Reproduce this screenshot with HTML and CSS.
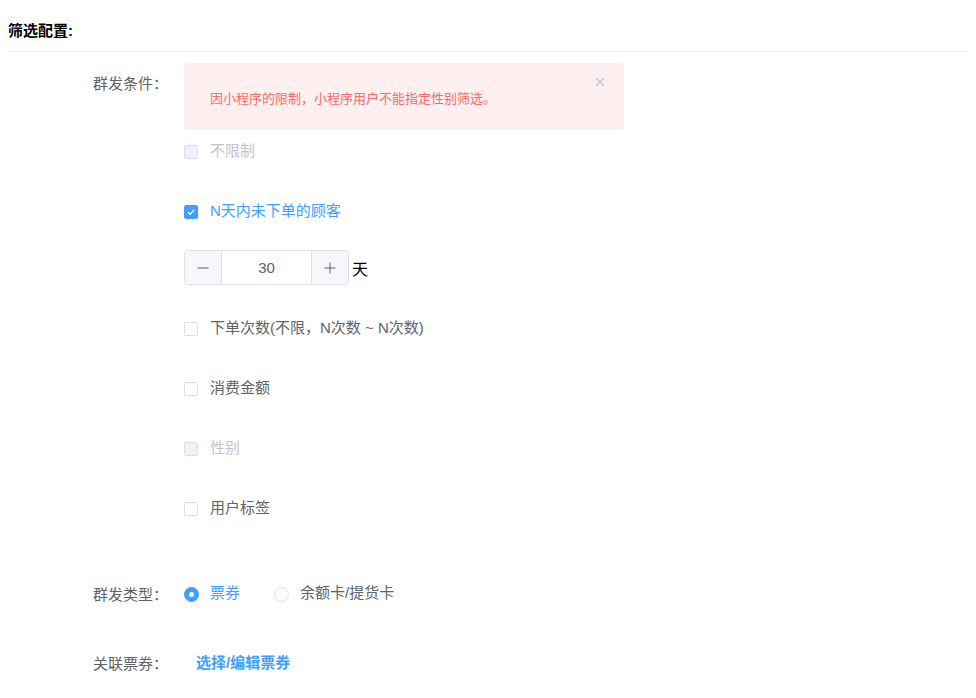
FILE: index.html
```html
<!DOCTYPE html>
<html>
<head>
<meta charset="utf-8">
<title>筛选配置</title>
<link rel="stylesheet" href="styles.css">
</head>
<body>
<div class="section-title">筛选配置:</div>

<div class="form">
	<div class="form-item">
		<label class="form-label">群发条件：</label>
		<div class="form-content">
			<div class="alert">
				<span class="alert-text">因小程序的限制，小程序用户不能指定性别筛选。</span>
				<span class="alert-close">
					<svg width="10" height="10" viewBox="0 0 10 10"><path d="M1 1L9 9M9 1L1 9" stroke="#c0c4cc" stroke-width="1.2" fill="none"/></svg>
				</span>
			</div>
			<div class="checks">
				<label class="check disabled"><span class="check-box"></span><span class="check-label">不限制</span></label>
				<label class="check checked"><span class="check-box">
					<svg width="14" height="14" viewBox="0 0 14 14"><path d="M3.8 7.1L6.1 9.3L10.3 4.8" stroke="#fff" stroke-width="1.3" fill="none"/></svg>
				</span><span class="check-label">N天内未下单的顾客</span></label>
				<div class="days">
					<div class="num-input">
						<span class="num-btn minus"><svg width="12" height="12" viewBox="0 0 12 12"><path d="M0.5 6H11.5" stroke="#606266" stroke-width="1"/></svg></span>
						<span class="num-value">30</span>
						<span class="num-btn plus"><svg width="12" height="12" viewBox="0 0 12 12"><path d="M0.5 6H11.5M6 0.5V11.5" stroke="#606266" stroke-width="1"/></svg></span>
					</div> 天
				</div>
				<label class="check"><span class="check-box"></span><span class="check-label">下单次数(不限，N次数 ~ N次数)</span></label>
				<label class="check"><span class="check-box"></span><span class="check-label">消费金额</span></label>
				<label class="check disabled"><span class="check-box"></span><span class="check-label">性别</span></label>
				<label class="check"><span class="check-box"></span><span class="check-label">用户标签</span></label>
			</div>
		</div>
	</div>

	<div class="form-item type-row">
		<label class="form-label">群发类型：</label>
		<div class="form-content radios">
			<label class="radio checked"><span class="radio-dot"></span><span class="radio-label">票券</span></label>
			<label class="radio"><span class="radio-dot"></span><span class="radio-label">余额卡/提货卡</span></label>
		</div>
	</div>

	<div class="form-item coupon-row">
		<label class="form-label">关联票券：</label>
		<div class="form-content">
			<a class="link-btn">选择/编辑票券</a>
		</div>
	</div>
</div>
</body>
</html>
```
FILE: styles.css
```css
body {margin: 8px; font: 16px "Liberation Sans", "Noto Sans CJK SC", sans-serif; color: #000; background: #fff;}

.section-title {width: calc(100vw - 8px); box-sizing: border-box; font-size: 15px; font-weight: bold; line-height: 20px; padding: 13px 0 10px; border-bottom: 1px solid #ebeef5;}

.form {padding-top: 11px;}
.form-item {display: flex; align-items: flex-start;}
.form-label {width: 176px; flex: none; box-sizing: border-box; padding-right: 16px; text-align: right; font-size: 15px; line-height: 40px; padding-top: 1px; color: #606266; white-space: nowrap;}
.form-content {flex: 1; min-width: 0;}

.alert {position: relative; width: 440px; height: 67px; box-sizing: border-box; padding: 26px 26px 0; background: #fef0f0; border-radius: 4px;}
.alert-text {font-size: 13px; line-height: 20px; color: #f56c6c;}
.alert-close {position: absolute; top: 14px; right: 19px; line-height: 10px;}

.checks {padding-top: 12px;}
.check {display: flex; align-items: center; height: 20px; margin-bottom: 40px; font-size: 15px; color: #606266; cursor: pointer;}
.check-label {line-height: 18px; padding-bottom: 2px;}
.check-box {width: 14px; height: 14px; box-sizing: border-box; border: 1px solid #dcdfe6; border-radius: 2px; background: #fff; display: flex; align-items: center; justify-content: center; margin-right: 12px;}
.check-box svg {display: block; margin: -1px;}
.check.checked .check-box {background: #409eff; border-color: #409eff;}
.check.checked .check-label {color: #409eff;}
.check.disabled .check-box {background: #edf2fc; border-color: #dcdfe6;}
.check.disabled .check-label {color: #c0c4cc;}

.days {margin: -12px 0 34px; display: flex; align-items: center; font-size: 16px; color: #000;}
.num-input {display: flex; width: 165px; height: 35px; box-sizing: border-box; border: 1px solid #dcdfe6; border-radius: 4px; overflow: hidden; margin-right: 3px;}
.num-btn {width: 36px; flex: none; background: #f5f7fa; display: flex; align-items: center; justify-content: center;}
.num-btn.minus {border-right: 1px solid #dcdfe6;}
.num-btn.plus {border-left: 1px solid #dcdfe6;}
.num-value {flex: 1; text-align: center; font-size: 15px; line-height: 33px; color: #606266;}

.type-row {margin-top: 15px;}
.radios {display: flex; align-items: center; height: 40px;}
.radio {display: flex; align-items: center; margin-right: 34px; font-size: 15px; color: #606266; cursor: pointer;}
.radio-label {line-height: 18px; padding-bottom: 2px;}
.radio-dot {width: 15px; height: 15px; box-sizing: border-box; border: 1px solid #dcdfe6; border-radius: 50%; margin-right: 11px; position: relative;}
.radio.checked .radio-dot {background: #409eff; border-color: #409eff;}
.radio.checked .radio-dot::after {content: ""; position: absolute; left: 50%; top: 50%; width: 5px; height: 5px; margin: -2.5px 0 0 -2.5px; border-radius: 50%; background: #fff;}
.radio.checked .radio-label {color: #409eff;}

.coupon-row {margin-top: 28px;}
.link-btn {display: inline-block; margin-left: 12px; font-size: 15px; font-weight: bold; line-height: 40px; color: #409eff; cursor: pointer;}
```
